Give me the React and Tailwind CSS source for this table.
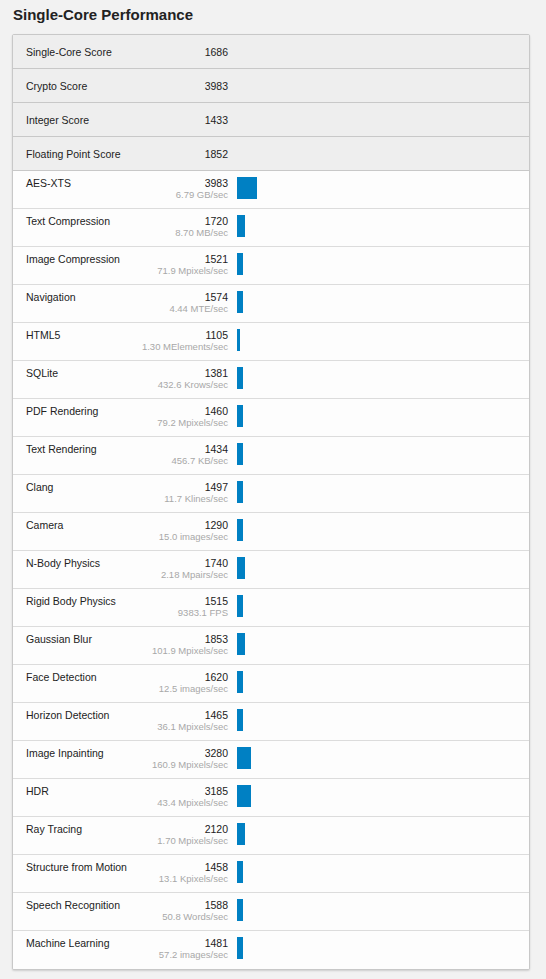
import React from "react";

const summary = [
  ["Single-Core Score", "1686"],
  ["Crypto Score", "3983"],
  ["Integer Score", "1433"],
  ["Floating Point Score", "1852"],
];

const rows = [
  ["AES-XTS", "3983", "6.79 GB/sec", 20],
  ["Text Compression", "1720", "8.70 MB/sec", 8],
  ["Image Compression", "1521", "71.9 Mpixels/sec", 6],
  ["Navigation", "1574", "4.44 MTE/sec", 6],
  ["HTML5", "1105", "1.30 MElements/sec", 3],
  ["SQLite", "1381", "432.6 Krows/sec", 6],
  ["PDF Rendering", "1460", "79.2 Mpixels/sec", 6],
  ["Text Rendering", "1434", "456.7 KB/sec", 6],
  ["Clang", "1497", "11.7 Klines/sec", 6],
  ["Camera", "1290", "15.0 images/sec", 6],
  ["N-Body Physics", "1740", "2.18 Mpairs/sec", 8],
  ["Rigid Body Physics", "1515", "9383.1 FPS", 6],
  ["Gaussian Blur", "1853", "101.9 Mpixels/sec", 8],
  ["Face Detection", "1620", "12.5 images/sec", 6],
  ["Horizon Detection", "1465", "36.1 Mpixels/sec", 6],
  ["Image Inpainting", "3280", "160.9 Mpixels/sec", 14],
  ["HDR", "3185", "43.4 Mpixels/sec", 14],
  ["Ray Tracing", "2120", "1.70 Mpixels/sec", 8],
  ["Structure from Motion", "1458", "13.1 Kpixels/sec", 6],
  ["Speech Recognition", "1588", "50.8 Words/sec", 6],
  ["Machine Learning", "1481", "57.2 images/sec", 6],
];

export default function App() {
  return (
    <div
      className="min-h-screen w-full bg-[#f2f2f2] pb-[11px]"
      style={{ fontFamily: '"Liberation Sans", Arial, sans-serif' }}
    >
      <div className="pl-[13px] pt-[5px] h-[34px] text-[15px] leading-[20px] font-bold text-[#222]">
        Single-Core Performance
      </div>
      <div className="ml-[12px] w-[518px] border border-[#c8c8c8] rounded-[2px] bg-white shadow-[0_1px_2px_rgba(0,0,0,0.15)] overflow-hidden">
        {summary.map(([name, val]) => (
          <div
            key={name}
            className="h-[34px] flex items-center bg-[#eeeeee] border-b border-[#c8c8c8] pl-[13px] text-[10.5px] leading-[12px] text-[#222]"
          >
            <div className="w-[202px] flex justify-between">
              <span>{name}</span>
              <span>{val}</span>
            </div>
          </div>
        ))}
        {rows.map(([name, val, sub, w], i) => (
          <div
            key={name}
            className={
              "h-[38px] flex items-start pt-[6px] pl-[13px] bg-[#fdfdfd] " +
              (i < rows.length - 1 ? "border-b border-[#dcdcdc]" : "")
            }
          >
            <div className="w-[202px] flex justify-between">
              <span className="text-[10.5px] leading-[12px] text-[#222]">{name}</span>
              <div className="flex flex-col items-end">
                <span className="text-[10.5px] leading-[12px] text-[#222]">{val}</span>
                <span className="text-[9.5px] leading-[11px] text-[#a8a8a8]">{sub}</span>
              </div>
            </div>
            <div className="ml-[9px] h-[22px] bg-[#0080c3]" style={{ width: w + "px" }} />
          </div>
        ))}
      </div>
    </div>
  );
}
